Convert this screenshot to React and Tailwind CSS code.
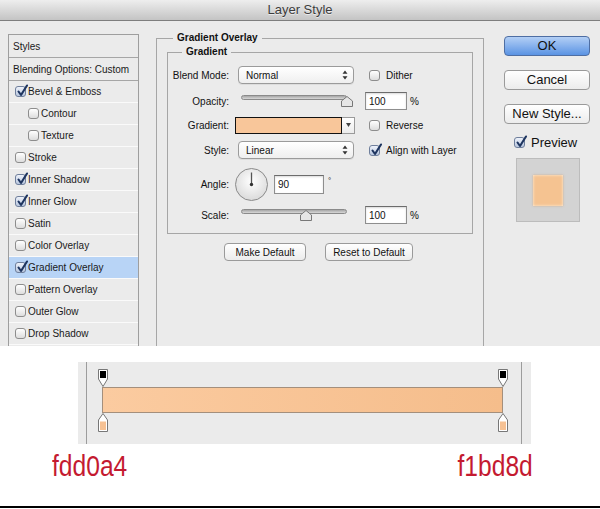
import React from "react";

const styleRows = [
  { label: "Bevel & Emboss", checked: true },
  { label: "Contour", sub: true },
  { label: "Texture", sub: true },
  { label: "Stroke" },
  { label: "Inner Shadow", checked: true },
  { label: "Inner Glow", checked: true },
  { label: "Satin" },
  { label: "Color Overlay" },
  { label: "Gradient Overlay", checked: true, active: true },
  { label: "Pattern Overlay" },
  { label: "Outer Glow" },
  { label: "Drop Shadow" },
];

function Check({ checked, className = "" }) {
  const box = checked
    ? "bg-linear-to-b from-[#eef2fa] to-[#b9c7df] border-[#6f7f9c]"
    : "bg-linear-to-b from-white to-[#dddddd] border-[#8d8d8d]";
  return (
    <span className={`relative inline-block w-[11px] h-[11px] shrink-0 rounded-[3px] border ${box} ${className}`}>
      {checked && (
        <svg className="absolute left-[0.5px] -top-[3px]" width="12" height="13" viewBox="0 0 12 13">
          <path d="M1.5 7.5 L4 11 L10 1.5" fill="none" stroke="#1e3560" strokeWidth="2.1" strokeLinecap="round" strokeLinejoin="round" />
        </svg>
      )}
    </span>
  );
}

function Select({ value }) {
  return (
    <div className="ml-[9px] w-[116px] h-[18px] rounded-[4px] border border-[#9b9b9b] bg-linear-to-b from-white to-[#efefef] shadow-[0_1px_0_rgba(0,0,0,0.06)] flex items-center pl-[7px] pr-[5px]">
      <span className="flex-1 text-[10px] text-[#111]">{value}</span>
      <svg width="6" height="10" viewBox="0 0 6 10">
        <path d="M3 0.5 L5.5 3.8 H0.5 Z M3 9.5 L5.5 6.2 H0.5 Z" fill="#333" />
      </svg>
    </div>
  );
}

function Field({ value, className = "" }) {
  return (
    <div className={`h-[18px] border border-[#8e8e8e] border-t-[#6c6c6c] bg-white shadow-[inset_0_1px_2px_rgba(0,0,0,0.15)] text-[10px] text-[#111] pl-[3px] flex items-center ${className}`}>
      {value}
    </div>
  );
}

function Slider({ thumb }) {
  return (
    <div className="relative ml-[12px] w-[106px] h-[12px]">
      <div className="h-[5px] rounded-full border border-[#8a8a8a] bg-linear-to-b from-[#a6a6a6] to-[#d8d8d8]" />
      <svg className={`absolute top-[1px] ${thumb}`} width="12" height="11" viewBox="0 0 12 11">
        <path d="M6 0.5 L11.5 5 V10.5 H0.5 V5 Z" fill="#e6e6e6" stroke="#787878" />
      </svg>
    </div>
  );
}

function SmallButton({ children, className = "" }) {
  return (
    <div className={`h-[18px] rounded-[4px] border border-[#9a9a9a] bg-linear-to-b from-white to-[#ececec] text-[10px] text-[#111] flex items-center justify-center ${className}`}>
      {children}
    </div>
  );
}

function MacButton({ children, primary, className = "" }) {
  const look = primary
    ? "border-[#4e6ea3] bg-linear-to-b from-[#b3cff5] to-[#5a93e3]"
    : "border-[#9a9a9a] bg-linear-to-b from-white to-[#ececec]";
  return (
    <div className={`w-[86px] h-[20px] rounded-[4px] border ${look} text-[13px] text-[#111] flex items-center justify-center ${className}`}>
      {children}
    </div>
  );
}

function TopStop() {
  return (
    <svg width="10" height="18" viewBox="0 0 10 18">
      <path d="M0.5 0.5 H9.5 V10 L5 17.5 L0.5 10 Z" fill="#fff" stroke="#777" />
      <rect x="2" y="2" width="6" height="7" fill="#000" />
    </svg>
  );
}

function BottomStop() {
  return (
    <svg width="10" height="19" viewBox="0 0 10 19">
      <path d="M5 0.5 L9.5 7 V18.5 H0.5 V7 Z" fill="#fff" stroke="#777" />
      <rect x="2" y="8.5" width="6" height="8.5" fill="#f6c193" />
    </svg>
  );
}

export default function App() {
  return (
    <div className="w-[600px] h-[509px] bg-white flex flex-col overflow-hidden font-['Liberation_Sans',Arial,sans-serif]">
      {/* title bar */}
      <div className="h-[21px] shrink-0 border-b border-[#7e7e7e] bg-linear-to-b from-[#eeeeee] to-[#c4c4c4] flex items-center justify-center text-[13px] text-[#3c3c3c] [text-shadow:0_1px_0_rgba(255,255,255,0.6)]">
        Layer Style
      </div>

      {/* dialog */}
      <div className="h-[325px] shrink-0 bg-[#ebebeb] flex">
        {/* styles list */}
        <div className="ml-[8px] mt-[13px] w-[131px] border border-b-0 border-[#9e9e9e] text-[10px] text-[#1a1a1a]">
          <div className="h-[23px] border-b border-[#a6a6a6] flex items-center pl-[4px]">Styles</div>
          <div className="h-[23px] border-b border-[#a6a6a6] flex items-center pl-[4px]">Blending Options: Custom</div>
          {styleRows.map((r) => (
            <div
              key={r.label}
              className={`h-[22px] border-b border-[#fafafa] flex items-center gap-[2px] ${r.sub ? "pl-[19px]" : "pl-[6px]"} ${r.active ? "bg-[#b8d4f6]" : ""}`}
            >
              <Check checked={r.checked} />
              <span>{r.label}</span>
            </div>
          ))}
        </div>

        {/* gradient overlay */}
        <fieldset className="ml-[17px] mt-[11px] w-[328px] border border-b-0 border-[#a6a6a6] text-[10px] text-[#111]">
          <legend className="ml-[16px] px-[4px] font-bold leading-[12px]">Gradient Overlay</legend>

          <fieldset className="mx-[10px] mt-[2px] h-[188px] border border-[#a6a6a6]">
            <legend className="ml-[14px] px-[4px] font-bold leading-[12px]">Gradient</legend>

            <div className="mt-[8px] h-[18px] flex items-center">
              <span className="w-[61px] text-right">Blend Mode:</span>
              <Select value="Normal" />
              <Check className="ml-[15px]" />
              <span className="ml-[6px]">Dither</span>
            </div>

            <div className="mt-[8px] h-[18px] flex items-center">
              <span className="w-[61px] text-right">Opacity:</span>
              <Slider thumb="left-[100px]" />
              <Field value="100" className="ml-[18px] w-[42px]" />
              <span className="ml-[3px]">%</span>
            </div>

            <div className="mt-[6px] h-[18px] flex items-center">
              <span className="w-[61px] text-right">Gradient:</span>
              <div className="ml-[6px] w-[107px] h-[17px] border border-[#111] bg-[#f8c69a]" />
              <div className="w-[13px] h-[17px] border border-l-0 border-[#9a9a9a] bg-linear-to-b from-white to-[#ececec] flex items-center justify-center">
                <svg width="5" height="4" viewBox="0 0 5 4"><path d="M0 0 H5 L2.5 4 Z" fill="#444" /></svg>
              </div>
              <Check className="ml-[14px]" />
              <span className="ml-[6px]">Reverse</span>
            </div>

            <div className="mt-[7px] h-[18px] flex items-center">
              <span className="w-[61px] text-right">Style:</span>
              <Select value="Linear" />
              <Check checked className="ml-[15px]" />
              <span className="ml-[6px]">Align with Layer</span>
            </div>

            <div className="mt-[8px] h-[34px] flex items-center">
              <span className="w-[61px] text-right">Angle:</span>
              <svg className="ml-[6px]" width="33" height="33" viewBox="0 0 33 33">
                <defs>
                  <radialGradient id="dial" cx="50%" cy="40%" r="62%">
                    <stop offset="0" stopColor="#ffffff" />
                    <stop offset="1" stopColor="#d9d9d9" />
                  </radialGradient>
                </defs>
                <circle cx="16.5" cy="16.5" r="16" fill="url(#dial)" stroke="#8a8a8a" />
                <line x1="16.5" y1="16.5" x2="16.5" y2="4.5" stroke="#555" strokeWidth="1.3" />
                <circle cx="16.5" cy="16.5" r="1.7" fill="#333" />
              </svg>
              <Field value="90" className="ml-[6px] w-[50px] h-[19px]" />
              <span className="ml-[4px] -mt-[6px] text-[8px]">°</span>
            </div>

            <div className="mt-[5px] h-[18px] flex items-center">
              <span className="w-[61px] text-right">Scale:</span>
              <Slider thumb="left-[59px]" />
              <Field value="100" className="ml-[18px] w-[42px]" />
              <span className="ml-[3px]">%</span>
            </div>
          </fieldset>

          <div className="mt-[9px] ml-[67px] flex gap-[19px]">
            <SmallButton className="w-[82px]">Make Default</SmallButton>
            <SmallButton className="w-[88px]">Reset to Default</SmallButton>
          </div>
        </fieldset>

        {/* buttons */}
        <div className="ml-[20px] mt-[15px] flex flex-col">
          <MacButton primary>OK</MacButton>
          <MacButton className="mt-[14px]">Cancel</MacButton>
          <MacButton className="mt-[14px]">New Style...</MacButton>
          <div className="mt-[12px] ml-[10px] h-[13px] flex items-center gap-[6px] text-[13px] text-[#111]">
            <Check checked />
            <span>Preview</span>
          </div>
          <div className="mt-[9px] ml-[12px] w-[64px] h-[64px] bg-[#d3d3d3] border border-[#bcbcbc] flex items-center justify-center">
            <div className="w-[30px] h-[31px] bg-[#f5c391] shadow-[inset_0_0_3px_rgba(255,245,230,0.9),0_0_2px_rgba(200,140,80,0.5)]" />
          </div>
        </div>
      </div>

      {/* gradient editor detail */}
      <div className="h-[160px] shrink-0 bg-white flex flex-col">
        <div className="ml-[78px] mt-[16px] w-[453px] h-[82px] bg-[#ebebeb]">
          <div className="ml-[8px] w-[436px] h-full border-x border-[#9c9c9c]">
            <div className="ml-[11px] pt-[7px] w-[410px]">
              <div className="flex justify-between h-[18px]">
                <TopStop />
                <TopStop />
              </div>
              <div className="ml-[4px] w-[401px] h-[26px] border border-[#a48f7c] bg-linear-to-r from-[#fbcba0] to-[#f5bd8b]" />
              <div className="flex justify-between h-[19px]">
                <BottomStop />
                <BottomStop />
              </div>
            </div>
          </div>
        </div>
        <div className="mt-[7px] pl-[52px] pr-[67px] flex justify-between text-[30px] leading-none text-[#c41a30]">
          <span className="origin-left scale-x-[0.82]">fdd0a4</span>
          <span className="origin-right scale-x-[0.82]">f1bd8d</span>
        </div>
      </div>
      <div className="h-[2px] shrink-0 bg-black" />
      <div className="h-[1px] shrink-0 bg-white" />
    </div>
  );
}
